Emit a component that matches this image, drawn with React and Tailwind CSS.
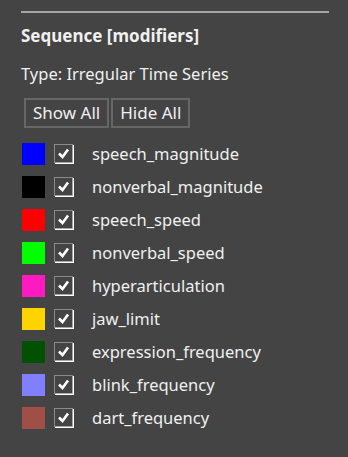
import React from "react";

const series = [
  { name: "speech_magnitude", color: "#0000ff" },
  { name: "nonverbal_magnitude", color: "#000000" },
  { name: "speech_speed", color: "#ff0000" },
  { name: "nonverbal_speed", color: "#00ff00" },
  { name: "hyperarticulation", color: "#ff19c1" },
  { name: "jaw_limit", color: "#ffd300" },
  { name: "expression_frequency", color: "#005200" },
  { name: "blink_frequency", color: "#8080ff" },
  { name: "dart_frequency", color: "#9f4f48" },
];

function Check() {
  return (
    <svg width="20" height="20" viewBox="0 0 20 20" className="shrink-0">
      <rect x="0.5" y="0.5" width="18" height="18" fill="none" stroke="#8a8a8a" />
      <path d="M1 19.5 H19.5 V1" fill="none" stroke="#ffffff" strokeWidth="1.5" />
      <path d="M5 9.5 L8.5 13 L14 5.5" fill="none" stroke="#ffffff" strokeWidth="2.6" />
    </svg>
  );
}

export default function App() {
  return (
    <div
      className="w-[348px] h-[457px] bg-[#444444] text-[#f0f0f0] pl-[21px] pt-[11px]"
      style={{ fontFamily: '"Noto Sans", "Open Sans", sans-serif' }}
    >
      <div className="w-[308px] h-[2px] bg-[#a6a6a6]" />

      <h3 className="mt-[12px] text-[17px] font-bold leading-[22px]">Sequence [modifiers]</h3>

      <p className="mt-[16px] text-[16.5px] leading-[22px]">Type: Irregular Time Series</p>

      <div className="mt-[13px] ml-[3px] flex gap-[2px]">
        <button className="h-[30px] px-[7px] border-2 border-[#666666] text-[17px] leading-[20px] text-[#f0f0f0]">
          Show All
        </button>
        <button className="h-[30px] px-[7px] border-2 border-[#666666] text-[17px] leading-[20px] text-[#f0f0f0]">
          Hide All
        </button>
      </div>

      <div className="mt-[9px] flex flex-col">
        {series.map((s) => (
          <div key={s.name} className="h-[33px] flex items-center ml-[1px]">
            <div className="w-[23px] h-[22px]" style={{ backgroundColor: s.color }} />
            <div className="ml-[9px]">
              <Check />
            </div>
            <span className="ml-[18px] text-[16.5px] leading-[20px]">{s.name}</span>
          </div>
        ))}
      </div>
    </div>
  );
}
